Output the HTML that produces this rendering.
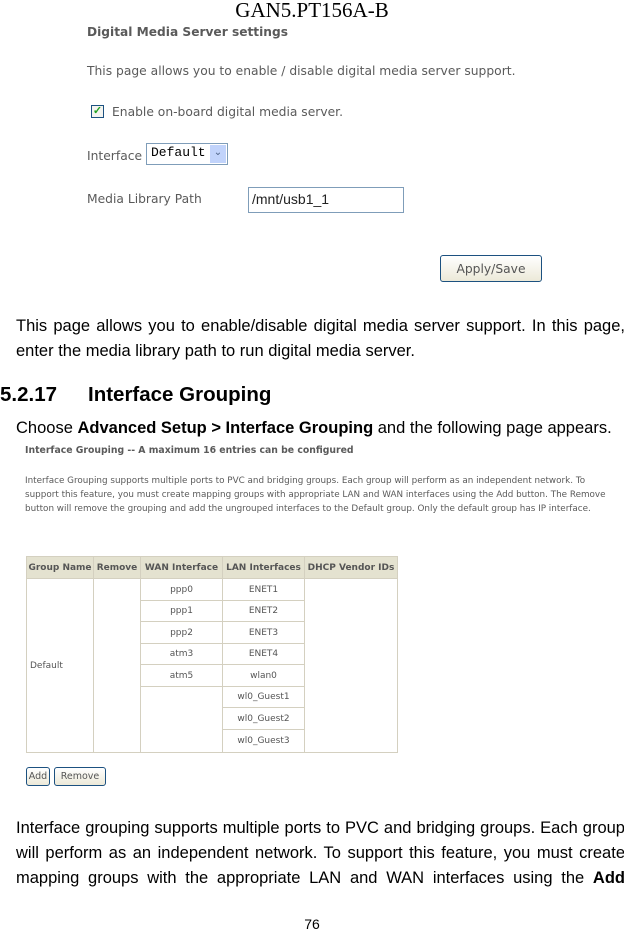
<!DOCTYPE html>
<html><head><meta charset="utf-8"><style>
body{margin:0;width:624px;height:931px;background:#fff;position:relative;overflow:hidden;font-family:"Liberation Sans",sans-serif;}
.a{position:absolute;white-space:nowrap;}
.s{font-family:"DejaVu Sans","Liberation Sans",sans-serif;color:#5a5a5a;}
.doc{font-size:16.5px;color:#000;}
.j{position:absolute;left:16px;width:609px;font-size:16.5px;text-align:justify;text-align-last:justify;white-space:nowrap;}
.c{position:absolute;border:1px solid #d4d0c0;box-sizing:border-box;font-family:"DejaVu Sans",sans-serif;font-size:9px;color:#555;display:flex;align-items:center;justify-content:center;}
.h{background:#e4e2d0;font-weight:bold;color:#555;}
.btn{position:absolute;border:1px solid #1c5180;border-radius:3px;background:linear-gradient(#fff,#ece9d8);box-sizing:border-box;font-family:"DejaVu Sans",sans-serif;color:#555;display:flex;align-items:center;justify-content:center;}
</style></head><body>
<div class="a" style="left:0;width:624px;top:-2px;text-align:center;font-family:'Liberation Serif',serif;font-size:21px;">GAN5.PT156A-B</div>
<div class="a s" style="left:87px;top:25px;font-size:12.2px;font-weight:bold;">Digital Media Server settings</div>
<div class="a s" style="left:87px;top:64px;font-size:12.3px;">This page allows you to enable / disable digital media server support.</div>
<div class="a" style="left:91px;top:105px;width:13px;height:13px;border:1px solid #1c5180;box-sizing:border-box;background:#f4f4f0;color:#21a121;font-size:11px;line-height:11px;text-align:center;font-weight:bold;">✓</div>
<div class="a s" style="left:112px;top:105px;font-size:12.3px;">Enable on-board digital media server.</div>
<div class="a s" style="left:87px;top:149px;font-size:12.3px;">Interface</div>
<div class="a" style="left:146px;top:143px;width:82px;height:22px;border:1px solid #7f9db9;box-sizing:border-box;font-family:'Liberation Mono',monospace;font-size:13px;padding:1px 4px;">Default<span style="position:absolute;right:1px;top:1px;width:16px;height:18px;background:#c1d3fb;color:#4d6185;font-size:10px;text-align:center;line-height:18px;">⌄</span></div>
<div class="a s" style="left:87px;top:192px;font-size:12.3px;">Media Library Path</div>
<div class="a" style="left:248px;top:187px;width:156px;height:26px;border:1px solid #7f9db9;box-sizing:border-box;font-size:14px;padding:3px 3px;color:#222;">/mnt/usb1_1</div>
<div class="btn" style="left:440px;top:255px;width:102px;height:27px;font-size:12.3px;">Apply/Save</div>
<div class="j" style="top:317px;">This page allows you to enable/disable digital media server support. In this page,</div>
<div class="a doc" style="left:16px;top:342px;">enter the media library path to run digital media server.</div>
<div class="a" style="left:0;top:383px;font-size:20.5px;font-weight:bold;">5.2.17<span style="position:absolute;left:88px;">Interface Grouping</span></div>
<div class="a doc" style="left:16px;top:419px;">Choose <b>Advanced Setup &gt; Interface Grouping</b> and the following page appears.</div>
<div class="a s" style="left:25px;top:445px;font-size:9.3px;font-weight:bold;">Interface Grouping -- A maximum 16 entries can be configured</div>
<div class="a s" style="left:25px;top:474px;font-size:8.8px;line-height:14px;">Interface Grouping supports multiple ports to PVC and bridging groups. Each group will perform as an independent network. To<br>support this feature, you must create mapping groups with appropriate LAN and WAN interfaces using the Add button. The Remove<br>button will remove the grouping and add the ungrouped interfaces to the Default group. Only the default group has IP interface.</div>
<div class="c h" style="left:26px;top:556px;width:68px;height:23px;">Group Name</div>
<div class="c h" style="left:93px;top:556px;width:48px;height:23px;">Remove</div>
<div class="c h" style="left:140px;top:556px;width:83px;height:23px;">WAN Interface</div>
<div class="c h" style="left:222px;top:556px;width:83px;height:23px;">LAN Interfaces</div>
<div class="c h" style="left:304px;top:556px;width:94px;height:23px;">DHCP Vendor IDs</div>
<div class="c" style="left:26px;top:578px;width:68px;height:175px;justify-content:flex-start;padding-left:3px;">Default</div>
<div class="c" style="left:93px;top:578px;width:48px;height:175px;"></div>
<div class="c" style="left:304px;top:578px;width:94px;height:175px;"></div>
<div class="c" style="left:140px;top:686px;width:83px;height:67px;border-top:none;border-right:none;"></div>
<div class="c" style="left:140px;top:578px;width:83px;height:23px;">ppp0</div><div class="c" style="left:222px;top:578px;width:83px;height:23px;">ENET1</div>
<div class="c" style="left:140px;top:600px;width:83px;height:22px;">ppp1</div><div class="c" style="left:222px;top:600px;width:83px;height:22px;">ENET2</div>
<div class="c" style="left:140px;top:621px;width:83px;height:23px;">ppp2</div><div class="c" style="left:222px;top:621px;width:83px;height:23px;">ENET3</div>
<div class="c" style="left:140px;top:643px;width:83px;height:22px;">atm3</div><div class="c" style="left:222px;top:643px;width:83px;height:22px;">ENET4</div>
<div class="c" style="left:140px;top:664px;width:83px;height:23px;">atm5</div><div class="c" style="left:222px;top:664px;width:83px;height:23px;">wlan0</div>
<div class="c" style="left:222px;top:686px;width:83px;height:22px;">wl0_Guest1</div>
<div class="c" style="left:222px;top:707px;width:83px;height:23px;">wl0_Guest2</div>
<div class="c" style="left:222px;top:729px;width:83px;height:24px;">wl0_Guest3</div>
<div class="btn" style="left:26px;top:767px;width:24px;height:19px;font-size:9.5px;">Add</div>
<div class="btn" style="left:54px;top:767px;width:52px;height:19px;font-size:9.5px;">Remove</div>
<div class="j" style="top:819px;">Interface grouping supports multiple ports to PVC and bridging groups. Each group</div>
<div class="j" style="top:844px;">will perform as an independent network. To support this feature, you must create</div>
<div class="j" style="top:869px;">mapping groups with the appropriate LAN and WAN interfaces using the <b>Add</b></div>
<div class="a" style="left:0;width:624px;top:916px;text-align:center;font-size:14px;">76</div>
</body></html>
